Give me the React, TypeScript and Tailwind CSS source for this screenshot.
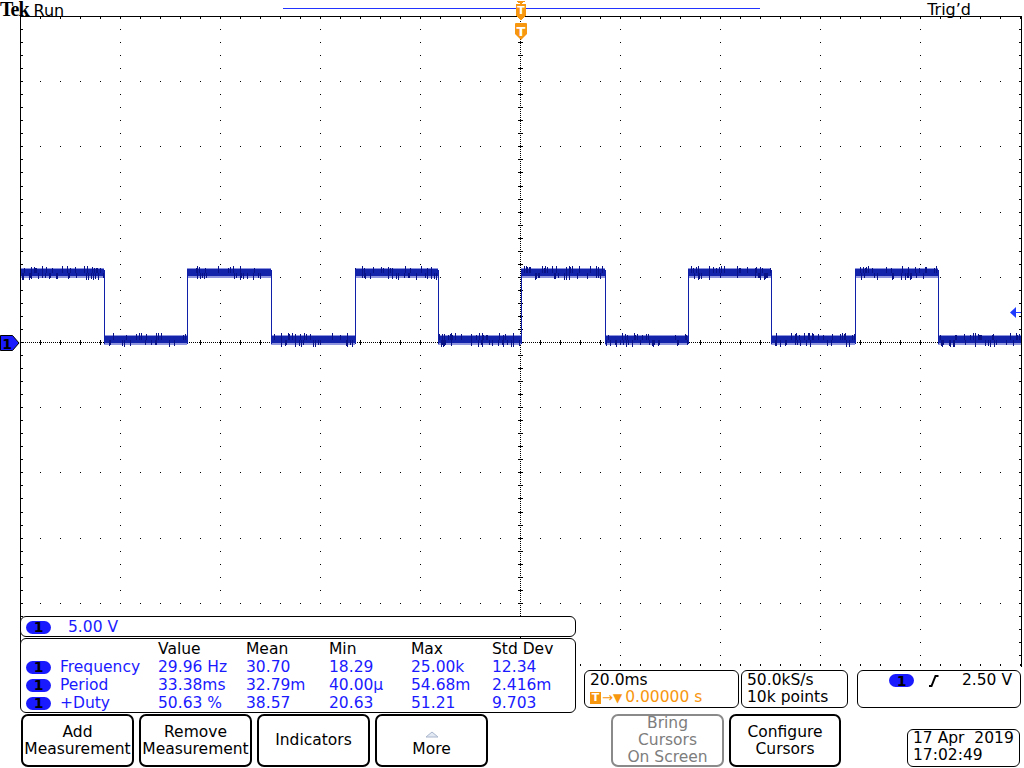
import React from "react";

const BLUE = "#1a1aff";
const ORANGE = "#f7960f";

function rand(seed: number) {
  let s = seed >>> 0;
  return () => {
    s = (Math.imul(s, 1664525) + 1013904223) >>> 0;
    return s / 4294967296;
  };
}

const EDGES = [104, 187, 271, 355, 438, 521, 605, 688, 771, 855, 938];

function tracePaths() {
  const r = rand(11);
  let halo = "";
  let core = "";
  let spikes = "";
  let high = true;
  let ei = 0;
  for (let x = 21; x < 1021; x++) {
    while (ei < EDGES.length && x >= EDGES[ei]) {
      high = !high;
      ei++;
    }
    const c = high ? 273 : 340;
    halo += `M${x + 0.5} ${c - 5}V${c + 5}`;
    core += `M${x + 0.5} ${c - 4}V${c + 3}`;
    if (r() < 0.2) spikes += `M${x + 0.5} ${c - 5 - Math.floor(r() * 3)}V${c}`;
    if (r() < 0.2) spikes += `M${x + 0.5} ${c}V${c + 5 + Math.floor(r() * 3)}`;
  }
  let edges = "";
  for (const e of EDGES) edges += `M${e + 0.5} 270V344`;
  return { halo, core, spikes, edges };
}

function gridPath() {
  let d = "";
  const dot = (x: number, y: number) => {
    d += `M${x} ${y + 0.5}h1`;
  };
  const X0 = 20;
  const Y0 = 16;
  const DY = 65.2;
  const BOT = 667;
  const ys: number[] = [];
  for (let j = 1; j < 60; j++) {
    const y = Math.round(Y0 + (DY / 5) * j);
    if (y >= BOT) break;
    ys.push(y);
  }
  for (let k = 1; k < 10; k++) {
    if (k === 5) continue;
    const y = Math.round(Y0 + DY * k);
    for (let x = X0 + 20; x < 1021; x += 20) dot(x, y);
  }
  for (let i = 1; i < 10; i++) {
    if (i === 5) continue;
    const x = X0 + 100 * i;
    for (const y of ys) dot(x, y);
  }
  for (let x = X0 + 1; x < 1021; x += 2) dot(x, 342);
  for (let y = Y0 + 1; y < BOT; y += 2) dot(520, y);
  for (let x = X0 + 20; x < 1021; x += 20) d += `M${x + 0.5} 340v5`;
  for (const y of ys) d += `M518 ${y + 0.5}h5`;
  for (let x = X0 + 20; x < 1021; x += 20) {
    d += `M${x + 0.5} 17v2`;
    d += `M${x + 0.5} ${BOT - 3}v2`;
  }
  for (const y of ys) {
    d += `M21 ${y + 0.5}h2`;
    d += `M1019 ${y + 0.5}h2`;
  }
  return d;
}

function Scope() {
  const t = React.useMemo(tracePaths, []);
  const grid = React.useMemo(gridPath, []);
  return (
    <svg
      className="absolute top-0 left-0"
      width={1024}
      height={700}
      shapeRendering="crispEdges"
    >
      <line x1={283} y1={8.5} x2={760} y2={8.5} stroke="#2233ff" />
      <path d={grid} stroke="#000" strokeWidth={1} fill="none" />
      <path d="M20.5 667V16.5H1021.5V667" fill="none" stroke="#000" />
      <path d={t.halo} stroke="#8e95de" strokeWidth={1} />
      <path d={t.core} stroke="#1424aa" strokeWidth={1} />
      <path d={t.spikes} stroke="#0a1288" strokeWidth={1} />
      <path d={t.edges} stroke="#1020a8" strokeWidth={1} />
      {/* trigger position marker (top) */}
      <path d="M516 1H526L521 4Z" fill={ORANGE} />
      <rect x={516} y={4} width={10} height={11} fill={ORANGE} />
      <text
        x={521}
        y={14}
        fontSize={11}
        fontWeight={700}
        fontFamily="DejaVu Sans"
        fill="#fff"
        textAnchor="middle"
      >
        T
      </text>
      <path d="M516 15H526L521 21Z" fill={ORANGE} />
      {/* trigger marker (large) */}
      <path
        d="M515 24Q515 23 516 23H526Q527 23 527 24V34L521 40L515 34Z"
        fill={ORANGE}
        shapeRendering="geometricPrecision"
      />
      <text
        x={521}
        y={36}
        fontSize={13}
        fontWeight={700}
        fontFamily="DejaVu Sans"
        fill="#fff"
        textAnchor="middle"
      >
        T
      </text>
      {/* channel 1 ground marker */}
      <path
        d="M0.5 335.5H12.5L19 343L12.5 350.5H0.5Z"
        fill={BLUE}
        stroke="#000"
        strokeLinejoin="round"
        shapeRendering="geometricPrecision"
      />
      <text
        x={7}
        y={348.5}
        fontSize={14}
        fontWeight={700}
        fontFamily="DejaVu Sans"
        fill="#000"
        textAnchor="middle"
      >
        1
      </text>
      {/* trigger level arrow */}
      <path d="M1010 312.5L1016 307V318Z" fill="#1f3bff" shapeRendering="geometricPrecision" />
      <path d="M1016 312.5H1021" stroke="#1f3bff" />
    </svg>
  );
}

function Pill() {
  return (
    <span className="inline-flex items-center justify-center w-[25px] h-[13px] rounded-full bg-[#1a1aff] text-black text-[14px] leading-none font-bold">
      1
    </span>
  );
}

function EdgeIcon() {
  return (
    <svg width={10} height={12} viewBox="0 0 10 12">
      <path d="M0 11H2.5L6.5 1H9.5" fill="none" stroke="#000" strokeWidth={2} />
    </svg>
  );
}

const rows = [
  ["Frequency", "29.96 Hz", "30.70", "18.29", "25.00k", "12.34"],
  ["Period", "33.38ms", "32.79m", "40.00µ", "54.68m", "2.416m"],
  ["+Duty", "50.63 %", "38.57", "20.63", "51.21", "9.703"],
];

function Btn({
  children,
  gray,
  w = "w-[113px]",
}: {
  children: React.ReactNode;
  gray?: boolean;
  w?: string;
}) {
  return (
    <div
      className={`${w} h-[53px] rounded-[7px] border-2 flex flex-col items-center justify-center text-center text-[15.5px] leading-[17px] ${
        gray ? "border-[#8a8a8a] text-[#7d7d7d]" : "border-black text-black"
      }`}
    >
      {children}
    </div>
  );
}

export default function App() {
  return (
    <div className="relative w-[1024px] h-[768px] overflow-hidden bg-white text-black font-['DejaVu_Sans',sans-serif]">
      <Scope />
      <div className="relative flex flex-col h-full">
        {/* header */}
        <div className="flex items-baseline h-[16px] pt-[2px] leading-[14px]">
          <span className="font-['Liberation_Serif',serif] font-bold text-[20px] tracking-[-1px]">
            Tek
          </span>
          <span className="ml-[5px] text-[16px]">Run</span>
          <span className="ml-auto mr-[53px] text-[16px] relative -top-[1px]">Trig’d</span>
        </div>

        <div className="h-[600px]" />

        {/* panels */}
        <div className="flex h-[98px]">
          <div className="ml-[20px] w-[556px] flex flex-col">
            <div className="h-[21px] rounded-[6px] border border-black bg-white flex items-start pt-[1px] pl-[5px] text-[15.5px] leading-[18px]">
              <span className="h-[18px] flex items-center">
                <Pill />
              </span>
              <span className="ml-[17px] text-[#1a1aff]">5.00 V</span>
            </div>
            <div className="mt-[1px] h-[75px] rounded-[6px] border border-black bg-white pt-[1px] text-[15.5px] leading-[18px]">
              <div className="flex">
                <span className="w-[137px]" />
                <span className="w-[88px]">Value</span>
                <span className="w-[83px]">Mean</span>
                <span className="w-[82px]">Min</span>
                <span className="w-[81px]">Max</span>
                <span>Std Dev</span>
              </div>
              {rows.map((r) => (
                <div key={r[0]} className="flex items-center text-[#1a1aff]">
                  <span className="w-[137px] flex items-center pl-[5px]">
                    <Pill />
                    <span className="ml-[9px]">{r[0]}</span>
                  </span>
                  <span className="w-[88px]">{r[1]}</span>
                  <span className="w-[83px]">{r[2]}</span>
                  <span className="w-[82px]">{r[3]}</span>
                  <span className="w-[81px]">{r[4]}</span>
                  <span>{r[5]}</span>
                </div>
              ))}
            </div>
          </div>

          <div className="flex pt-[54px] ml-[8px] text-[15.5px] leading-[17px]">
            <div className="w-[155px] h-[38px] rounded-[6px] border border-black bg-white pl-[5px] pt-[1px]">
              <div>20.0ms</div>
              <div className="flex items-center text-[#f7960f]">
                <span className="inline-flex items-center justify-center w-[11px] h-[12px] bg-[#f7960f] text-white text-[11px] font-bold leading-none">
                  T
                </span>
                <span className="text-[13px] ml-[1px] leading-none">→</span>
                <span className="text-[12px] leading-none">▼</span>
                <span className="ml-[3px]">0.00000 s</span>
              </div>
            </div>
            <div className="ml-[2px] w-[107px] h-[38px] rounded-[6px] border border-black bg-white pl-[5px] pt-[1px]">
              <div>50.0kS/s</div>
              <div>10k points</div>
            </div>
            <div className="ml-[9px] w-[164px] h-[38px] rounded-[6px] border border-black bg-white pt-[1px] flex items-start">
              <span className="h-[17px] flex items-center ml-[31px]">
                <Pill />
              </span>
              <span className="h-[17px] flex items-center ml-[15px]">
                <EdgeIcon />
              </span>
              <span className="ml-auto mr-[8px]">2.50 V</span>
            </div>
          </div>
        </div>

        {/* buttons */}
        <div className="flex items-start h-[54px]">
          <div className="ml-[21px] flex gap-[5px]">
            <Btn>
              <span>Add</span>
              <span>Measurement</span>
            </Btn>
            <Btn>
              <span>Remove</span>
              <span>Measurement</span>
            </Btn>
            <Btn>
              <span>Indicators</span>
            </Btn>
            <Btn>
              <svg width={16} height={17} viewBox="0 0 16 17">
                <path d="M2 13L8 8L14 13Z" fill="#e4eaf4" stroke="#a9b6cc" strokeWidth={1} />
              </svg>
              <span>More</span>
            </Btn>
          </div>
          <div className="ml-[123px] flex gap-[5px]">
            <Btn gray>
              <span>Bring</span>
              <span>Cursors</span>
              <span>On Screen</span>
            </Btn>
            <Btn w="w-[112px]">
              <span>Configure</span>
              <span>Cursors</span>
            </Btn>
          </div>
          <div className="ml-auto mr-[4px] mt-[15px] w-[113px] h-[38px] rounded-[6px] border border-black pl-[5px] text-[15.5px] leading-[17px]">
            <div>17 Apr&nbsp;&nbsp;2019</div>
            <div>17:02:49</div>
          </div>
        </div>
      </div>
    </div>
  );
}
